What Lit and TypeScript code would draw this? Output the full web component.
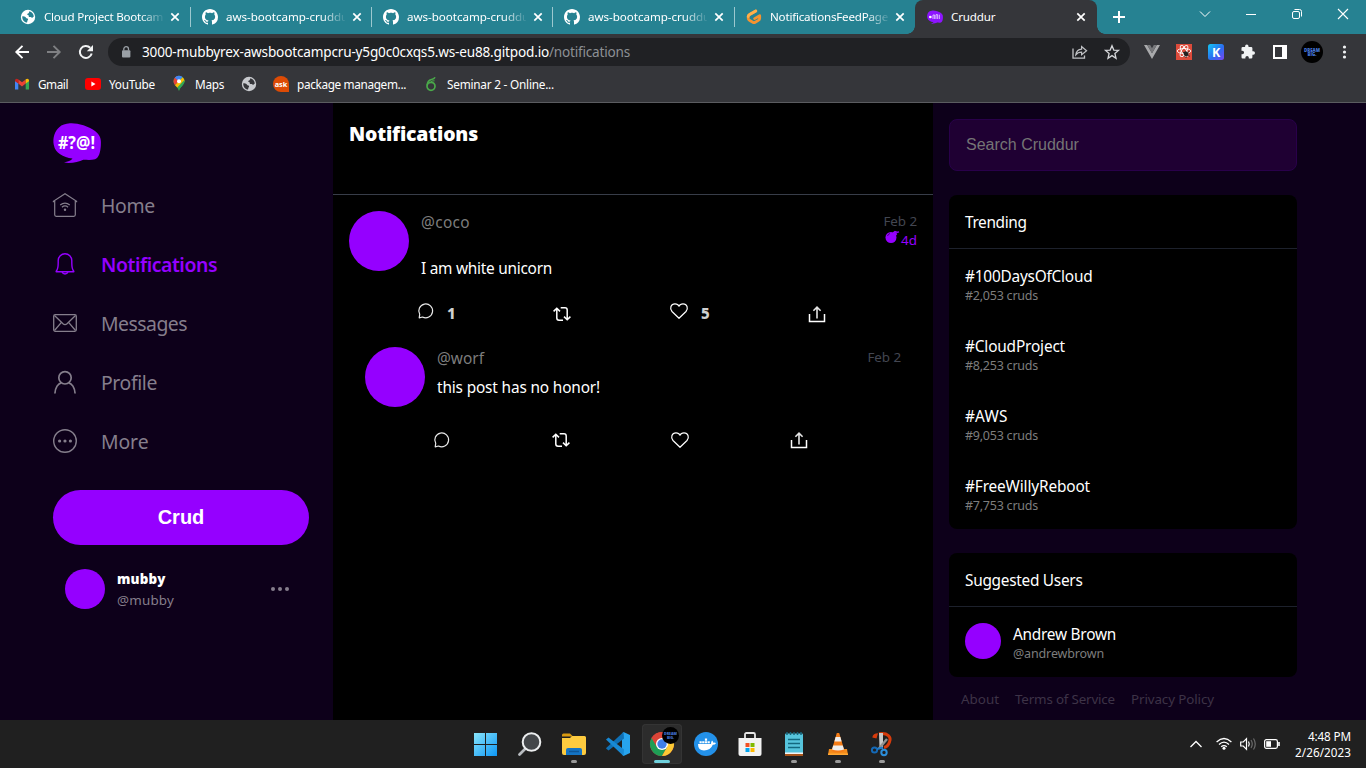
import { LitElement, html, svg, css } from "lit";
import { customElement, property } from "lit/decorators.js";

const draw = (w: number, h: number, body: unknown) =>
  html`<svg width=${w} height=${h} viewBox="0 0 ${w} ${h}" fill="none">${body}</svg>`;

/** A single line of text whose tracking is adjusted so that it fills a given advance. */
@customElement("fit-text")
class FitText extends LitElement {
  @property({ type: Number }) w = 0;
  @property() text = "";
  static styles = css`
    :host { display: inline-block; white-space: pre; flex: none; }
  `;
  render() { return html`<span>${this.text}</span>`; }
  updated() {
    const s = this.renderRoot.querySelector("span")!;
    s.style.letterSpacing = "0px";
    const natural = s.getBoundingClientRect().width;
    s.style.letterSpacing = `${(this.w - natural) / this.text.length}px`;
    this.style.width = `${this.w}px`;
  }
}

const t = (text: string, w: number, cls = "") =>
  html`<fit-text class=${cls} .text=${text} .w=${w}></fit-text>`;

const globe = (fg: string, bg: string) => draw(16, 16, svg`
  <circle cx="8" cy="8" r="7.2" fill=${fg}/>
  <path d="M2.2 7.4 C4 6.9 5.8 8 6.4 9.3 C8.2 9.3 8.6 10.4 7.5 11.6 L7 13.6 C4.3 13.2 2.2 11 2.2 7.4Z" fill=${bg}/>
  <path d="M9.2 2.3 C12.2 3 13.6 5.2 13.8 7.6 L12 9 C11 7.9 10.4 8.3 9.2 8.1 C8.2 7 9.2 6.2 8 5.9 C6.8 5.7 7 4.8 8.2 4.4 C9 4 9.2 3.3 9.2 2.3Z" fill=${bg}/>`);

const github = draw(16, 16, svg`<path fill="#fff" d="M8 0C3.58 0 0 3.58 0 8c0 3.54 2.29 6.53 5.47 7.59.4.07.55-.17.55-.38 0-.19-.01-.82-.01-1.49-2.01.37-2.53-.49-2.69-.94-.09-.23-.48-.94-.82-1.13-.28-.15-.68-.52-.01-.53.63-.01 1.08.58 1.23.82.72 1.21 1.87.87 2.33.66.07-.52.28-.87.51-1.07-1.78-.2-3.64-.89-3.64-3.95 0-.87.31-1.59.82-2.15-.08-.2-.36-1.02.08-2.12 0 0 .67-.21 2.2.82.64-.18 1.32-.27 2-.27s1.36.09 2 .27c1.53-1.04 2.2-.82 2.2-.82.44 1.1.16 1.92.08 2.12.51.56.82 1.27.82 2.15 0 3.07-1.87 3.75-3.65 3.95.29.25.54.73.54 1.48 0 1.07-.01 1.93-.01 2.2 0 .21.15.46.55.38A8.01 8.01 0 0 0 16 8c0-4.42-3.58-8-8-8Z"/>`);

const gitpod = draw(16, 16, svg`
  <path d="M9.8 2 L3.6 5.5 Q2.2 6.3 2.2 7.6 V9.3 Q2.2 10.6 3.4 11.3 L6.8 13.2 Q8 13.9 9.2 13.2 L12.4 11.4 Q13.7 10.7 13.7 9.3 V6.7 L8.6 9.6" stroke="#f5932f" stroke-width="2.8" stroke-linecap="round" stroke-linejoin="round"/>
  <path d="M9.8 2 L3.6 5.5 Q2.2 6.3 2.2 7.6" stroke="#ffb04a" stroke-width="2.8" stroke-linecap="round"/>`);

const bubblePath = "M17 .3 C24 -.2 35 2.8 42 8 C48 12.4 48.3 17.5 47.8 23 C47.3 29 46 35 42 36.2 C38 37.4 34 36.8 30.3 36.8 C25.5 38.8 18 41 11 39.6 C14.8 38.8 18 37.8 19.5 35.6 C10 34 2.4 30.4 .8 22 C-.6 15 1.8 8 6 4.5 C9 1.6 12.5 .6 17 .3Z";
const cruddur = html`<svg width="16" height="14" viewBox="0 0 48 40"><path d=${bubblePath} fill="#8d14ff"/>
  <circle cx="10" cy="20" r="4" fill="#fff"/><path d="M18 26V14h5v12M27 26V13h5v13M37 13v13" stroke="#d9b8ff" stroke-width="3" fill="none"/></svg>`;

const cross = draw(10, 10, svg`<path d="M1.3 1.3 8.7 8.7M8.7 1.3 1.3 8.7" stroke="#fff" stroke-width="1.7"/>`);
const dream = html`<svg width="22" height="22" viewBox="0 0 22 22"><circle cx="11" cy="11" r="11" fill="#000"/>
  <text class="tiny" text-anchor="middle"><tspan x="11" y="10.6">DREAM</tspan><tspan x="11" y="14.8">BIG.</tspan></text></svg>`;

@customElement("browser-chrome")
class BrowserChrome extends LitElement {
  static styles = css`
    :host { display: flex; flex-direction: column; height: 103px; color: #fff; background: #35363a; font-family: "Noto Sans", sans-serif; }
    svg { display: block; flex: none; overflow: visible; }
    .tabs { height: 34px; background: #268292; display: flex; padding-left: 8px; box-sizing: border-box; }
    .tab { width: 181px; height: 34px; display: flex; align-items: center; box-sizing: border-box; padding-left: 12px; font-size: 11.6px; background: linear-gradient(#9cc8cf, #9cc8cf) left 7px / 1px 20px no-repeat; }
    .tab.first { background: none; }
    .tab.first, .tab.wide { width: 182px; }
    .tab.narrow .label, .tab.active .label { width: 118px; }
    .tab.active { background: #35363a; border-radius: 8px 8px 0 0; width: 182px; position: relative; }
    .active::before, .active::after { content: ""; position: absolute; bottom: 0; width: 8px; height: 8px; }
    .active::before { left: -8px; background: radial-gradient(circle at 0 0, transparent 7.5px, #35363a 8px); }
    .active::after { right: -8px; background: radial-gradient(circle at 100% 0, transparent 7.5px, #35363a 8px); }
    .label { width: 119px; margin: 0 7px 0 8px; overflow: hidden; display: flex; line-height: 18px; }
    .fade { mask-image: linear-gradient(90deg, #000 96px, transparent 121px); -webkit-mask-image: linear-gradient(90deg, #000 96px, transparent 121px); }
    .plus { margin: 11px 0 0 16px; }
    .wins { margin-left: auto; display: grid; grid-template-columns: repeat(4, 46px); justify-items: center; align-items: center; height: 28px; }
    .bar { height: 36px; display: flex; align-items: center; padding-left: 6px; }
    .cell { width: 32px; display: flex; justify-content: center; flex: none; }
    .omni { width: 1022px; height: 28px; margin: 0 6px; background: #202124; border-radius: 14px; display: flex; align-items: center; font-size: 13.6px; line-height: 20px; box-sizing: border-box; padding: 0 2px 0 13px; }
    .omni .lock { margin-right: 11px; }
    .path { color: #8d9094; }
    .gap { flex: 1; }
    .marks { height: 32px; display: flex; align-items: center; font-size: 11.8px; line-height: 18px; padding: 0 0 5px 14px; box-sizing: border-box; }
    .marks svg { margin-right: 8px; }
    .marks fit-text { margin-right: 17px; }
    .lone { margin-right: 8px; }
    .edge { height: 1px; background: #5b5c60; }
    .tiny { font: 900 4.4px "Open Sans", sans-serif; fill: #4577d8; }
    .k { font: 700 12.5px "Open Sans", sans-serif; fill: #fff; }
    .ask { font: 700 7.6px "Open Sans", sans-serif; fill: #fff; }
  `;
  tab(icon: unknown, text: string, w: number, cls = "") {
    return html`<div class="tab ${cls}">${icon}<div class="label ${cls.includes("active") ? "" : "fade"}">${t(text, w)}</div>${cross}</div>`;
  }
  render() {
    return html`
      <div class="tabs">
        ${this.tab(globe("#fff", "#268292"), "Cloud Project Bootcamp", 126, "first")}
        ${this.tab(github, "aws-bootcamp-cruddur", 127)}
        ${this.tab(github, "aws-bootcamp-cruddur", 127)}
        ${this.tab(github, "aws-bootcamp-cruddur", 127, "wide")}
        ${this.tab(gitpod, "NotificationsFeedPage", 118, "narrow")}
        ${this.tab(cruddur, "Cruddur", 44.5, "active")}
        <div class="plus">${draw(12, 12, svg`<path d="M6 0V12M0 6H12" stroke="#fff" stroke-width="2"/>`)}</div>
        <div class="wins">
          ${draw(10, 6, svg`<path d="M0 .5 5 5.5 10 .5" stroke="#fff"/>`)}
          ${draw(10, 2, svg`<path d="M0 1.5H10" stroke="#fff"/>`)}
          ${draw(10, 10, svg`<rect x=".5" y="2.5" width="7" height="7" rx="1.5" stroke="#fff"/><path d="M2.5 .5H7.5Q9.5 .5 9.5 2.5V7.5" stroke="#fff"/>`)}
          ${draw(10, 10, svg`<path d="M0 0 10 10M10 0 0 10" stroke="#fff" stroke-width="1.1"/>`)}
        </div>
      </div>
      <div class="bar">
        <div class="cell">${draw(14, 14, svg`<path d="M14 7H1.5M7.5 .8 1.3 7 7.5 13.2" stroke="#fff" stroke-width="1.9"/>`)}</div>
        <div class="cell">${draw(14, 14, svg`<path d="M0 7H12.5M6.5 .8 12.7 7 6.5 13.2" stroke="#7f8083" stroke-width="1.9"/>`)}</div>
        <div class="cell">${draw(14, 14, svg`<path d="M12.7 8.5A6 6 0 1 1 11.2 2.8" stroke="#f1f3f4" stroke-width="2"/><path d="M14 0V6.2H7.8Z" fill="#f1f3f4"/>`)}</div>
        <div class="omni">
          <span class="lock">${draw(10, 12, svg`<rect x="1" y="4.2" width="8.4" height="7.2" rx="1" fill="#9aa0a6"/><path d="M2.8 4.5V3A2.3 2.3 0 0 1 7.5 3V4.5" stroke="#9aa0a6" stroke-width="1.3"/>`)}</span>
          ${t("3000-mubbyrex-awsbootcampcru-y5g0c0cxqs5.ws-eu88.gitpod.io", 407)}${t("/notifications", 81, "path")}
          <span class="gap"></span>
          <span class="cell">${draw(16, 14, svg`<path d="M1 3.5V13.2H12.5V10.5" stroke="#c0c2c5" stroke-width="1.3"/><path d="M3.8 9.8C4.2 6.4 6 4.4 9.6 4.1V1.5L14.6 5.7 9.6 9.7V7.2C7 7.2 5.2 8 3.8 9.8Z" stroke="#c0c2c5" stroke-width="1.2"/>`)}</span>
          <span class="cell">${draw(16, 16, svg`<path d="M8 1.7 9.8 6.1 14.5 6.4 10.9 9.5 12 14.2 8 11.6 4 14.2 5.1 9.5 1.5 6.4 6.2 6.1Z" stroke="#d5d7da" stroke-width="1.3"/>`)}</span>
        </div>
        <div class="cell">${draw(16, 14, svg`<path d="M0 0H3.2L8 8.2 12.8 0H16L8 14Z" fill="#a9aaac"/><path d="M3.2 0H6.2L8 3.2 9.8 0H12.8L8 8.2Z" fill="#77787b"/>`)}</div>
        <div class="cell">${draw(16, 16, svg`<rect width="16" height="16" fill="#dd4b3b"/><g stroke="#fff" stroke-width=".9"><ellipse cx="8" cy="7" rx="6.8" ry="2.5"/><ellipse cx="8" cy="7" rx="6.3" ry="2.4" transform="rotate(60 8 7)"/><ellipse cx="8" cy="7" rx="6.3" ry="2.4" transform="rotate(120 8 7)"/></g><ellipse cx="10" cy="9.8" rx="2.6" ry="2.2" transform="rotate(40 10 9.800)" fill="#242020"/><path d="M6.8 8 9 9.5M8 12.8 9.5 11M13.5 6.8 11.5 9M14 12.5 12 10.8M10 14V11" stroke="#242020" stroke-width=".8"/>`)}</div>
        <div class="cell">${draw(16, 16, svg`<defs><linearGradient id="kg" x1="0" y1="0" x2="1" y2="1"><stop offset="0" stop-color="#12c9f5"/><stop offset=".55" stop-color="#2b6df0"/><stop offset="1" stop-color="#7a45f0"/></linearGradient></defs><rect width="16" height="16" rx="2.5" fill="url(#kg)"/><text x="4" y="12.6" class="k">K</text>`)}</div>
        <div class="cell">${draw(16, 16, svg`<path d="M12.8 7.3h-.9V4.2A1.3 1.3 0 0 0 10.6 2.9H8V2.3a1.7 1.7 0 0 0-3.4 0v.6H2.2A1.3 1.3 0 0 0 1 4.2v2.5h.8a1.8 1.8 0 0 1 0 3.6H1v2.9a1.3 1.3 0 0 0 1.2 1.3h2.7v-.9a1.7 1.7 0 0 1 3.4 0v.9h2.3a1.3 1.3 0 0 0 1.3-1.3v-2.5h.9a1.7 1.7 0 0 0 0-3.4Z" transform="translate(.5 0)" fill="#f1f3f4"/>`)}</div>
        <div class="cell">${draw(14, 14, svg`<rect x="1" y="1" width="12" height="12" stroke="#fff" stroke-width="2"/><rect x="9" y="0" width="5" height="14" fill="#fff"/>`)}</div>
        <div class="cell">${dream}</div>
        <div class="cell">${draw(4, 14, svg`<g fill="#f1f3f4"><circle cx="2.500" cy="2" r="1.6"/><circle cx="2.500" cy="7" r="1.6"/><circle cx="2.500" cy="12" r="1.6"/></g>`)}</div>
      </div>
      <div class="marks">
        ${draw(16, 12, svg`<path d="M1 2.5V11.5H4.3V5Z" fill="#4285f4"/><path d="M15 2.5V11.5H11.7V5Z" fill="#34a853"/><path d="M4.3 1.5V5.6L8 8.4 11.7 5.6V1.5L8 4.3Z" fill="#ea4335"/><path d="M1 2.5Q1.2 0 4.3 1.3V5.6L1 3.2Z" fill="#c5221f"/><path d="M15 2.5Q14.8 0 11.7 1.3V5.6L15 3.2Z" fill="#fbbc04"/>`)}${t("Gmail", 30)}
        ${draw(16, 12, svg`<rect width="16" height="12" rx="3" fill="#f00"/><path d="M6.4 3.6V8.4L10.5 6Z" fill="#fff"/>`)}${t("YouTube", 46)}
        ${draw(15, 15, svg`<g transform="translate(1 0)"><path d="M6 15C5.6 11.5 .5 9 .5 5.3A5.5 5.5 0 0 1 11.5 5.3C11.5 9 6.4 11.5 6 15Z" fill="#34a853"/><path d="M.5 5.3A5.5 5.5 0 0 1 4 .2L6 5.3 2 9.3Q.5 7.5 .5 5.3Z" fill="#ea4335"/><path d="M1.8 1.8A5.5 5.5 0 0 1 9.5 1L6 5.3Z" fill="#4285f4"/><path d="M2 9.3 9.8 1.2Q11.5 3 11.5 5.3L4.5 11.7Z" fill="#fbbc04"/><path d="M11.5 5.3C11.5 9 6.4 11.5 6 15 5.8 13.5 5 12.5 4.3 11.5L11.3 4Z" fill="#34a853"/><circle cx="6" cy="5.3" r="2" fill="#fff"/></g>`)}${t("Maps", 29)}
        <span class="lone">${globe("#c8cace", "#35363a")}</span>
        ${draw(16, 16, svg`<path d="M8 0A8 8 0 1 0 8 16H16V8A8 8 0 0 0 8 0Z" fill="#dd4b05"/><text x="1.7" y="10.6" class="ask" textLength="12.6" lengthAdjust="spacingAndGlyphs">ask</text>`)}${t("package managem...", 109)}
        ${draw(16, 16, svg`<g transform="translate(1 1)"><ellipse cx="7" cy="9.3" rx="4" ry="4" stroke="#4aa94a" stroke-width="1.7"/><path d="M3.2 8.5Q3.2 3.5 7.5 2.5 10.5 2 11 .3" stroke="#4aa94a" stroke-width="1.5"/><path d="M6.5 5.3Q7.5 3.5 10.5 3.8" stroke="#4aa94a"/></g>`)}${t("Seminar 2 - Online...", 107)}
      </div>
      <div class="edge"></div>`;
  }
}

const navIcons = {
  home: draw(24, 24, svg`<g stroke="#857e8c" stroke-width="1.2"><path d="M.4 9.3V8.3L12 .8 23.6 8.3V9.3M1.7 8V21.8Q1.7 23.3 3.2 23.3H20.8Q22.3 23.3 22.3 21.8V8"/><path d="M7.2 12Q12 8.2 16.8 12M8.9 14.2Q12 11.7 15.1 14.2"/></g><circle cx="12" cy="16.8" r="1.2" fill="#857e8c"/>`),
  bell: draw(24, 24, svg`<path d="M3.2 19.3C5 17.3 5.2 15 5.2 11V8.5A6.8 6.8 0 0 1 18.8 8.5V11C18.8 15 19 17.3 20.8 19.3V19.8H3.2Z" stroke="#9500ff" stroke-width="1.4" stroke-linejoin="round"/><path d="M9 20.2Q10 22 12 22 14 22 15 20.2" stroke="#9500ff" stroke-width="1.4"/>`),
  mail: draw(24, 24, svg`<g stroke="#857e8c" stroke-width="1.3"><rect x=".7" y="3.7" width="22.6" height="16.6" rx="1.5"/><path d="M1.5 4.5 10 12.7Q12 14.5 14 12.7L22.5 4.5M1.5 19.5 8.4 11.3M22.5 19.5 15.6 11.3"/></g>`),
  user: draw(24, 24, svg`<g stroke="#857e8c" stroke-width="1.7"><circle cx="12" cy="7.8" r="6.2"/><path d="M1.9 23.5C2.2 17.5 5.2 13.4 8.3 12.8M15.7 12.8C18.8 13.4 21.8 17.5 22.1 23.5"/></g>`),
  more: draw(24, 24, svg`<circle cx="12" cy="12" r="11.3" stroke="#857e8c" stroke-width="1.4"/><g fill="#857e8c"><circle cx="6.6" cy="12" r="1.6"/><circle cx="12" cy="12" r="1.6"/><circle cx="17.4" cy="12" r="1.6"/></g>`),
};

@customElement("side-nav")
class SideNav extends LitElement {
  static styles = css`
    :host { display: block; width: 333px; box-sizing: border-box; padding: 20px 24px 0 53px; background: #0d001a; font-family: "Noto Sans", sans-serif; color: #857e8c; }
    svg { display: block; flex: none; overflow: visible; }
    .logo { height: 53px; }
    .mark { font: 700 17px "Open Sans", sans-serif; fill: #fff; }
    .item { height: 59px; display: flex; align-items: center; gap: 24px; font-size: 19.4px; line-height: 28px; }
    .item svg { margin-bottom: 1px; }
    .item fit-text { padding-top: 1px; }
    .on { color: #9500ff; font-weight: 600; }
    .crud { height: 55px; margin-top: 19px; border-radius: 28px; background: #9500ff; color: #fff; font: 700 20px "Liberation Sans", sans-serif; display: flex; align-items: center; justify-content: center; }
    .me { display: flex; align-items: center; margin-top: 24px; padding: 0 20px 0 12px; height: 40px; }
    .face { width: 40px; height: 40px; border-radius: 50%; background: #9500ff; margin-right: 12px; }
    .who { flex: 1; display: flex; flex-direction: column; font-size: 13.4px; line-height: 21px; padding-top: 2px; }
    .name { color: #fff; font-weight: 900; font-size: 13.4px; }
  `;
  render() {
    return html`
      <div class="logo"><svg width="48" height="40" viewBox="0 0 48 40"><path d=${bubblePath} fill="#9500ff"/><text x="5" y="25.5" textLength="37" lengthAdjust="spacingAndGlyphs" class="mark">#?@!</text></svg></div>
      <div class="item">${navIcons.home}${t("Home", 54)}</div>
      <div class="item on">${navIcons.bell}${t("Notifications", 116)}</div>
      <div class="item">${navIcons.mail}${t("Messages", 86)}</div>
      <div class="item">${navIcons.user}${t("Profile", 56)}</div>
      <div class="item">${navIcons.more}${t("More", 47.5)}</div>
      <div class="crud">Crud</div>
      <div class="me"><div class="face"></div><div class="who">${t("mubby", 48.5, "name")}${t("@mubby", 57)}</div>
        ${draw(18, 4, svg`<g fill="#857e8c"><circle cx="2" cy="2" r="2"/><circle cx="9" cy="2" r="2"/><circle cx="16" cy="2" r="2"/></g>`)}</div>`;
  }
}

const act = {
  reply: draw(16, 16, svg`<path d="M1.2 14.9 1.7 11.3A6.9 6.9 0 1 1 4.5 14Z" stroke="#e8e8e8" stroke-width="1.2" stroke-linejoin="round"/>`),
  repost: draw(18, 14, svg`<path d="M.6 4.4 3.8 1.2 7 4.400M3.8 1.6V11Q3.8 13.200 6 13.200H10M7.700 .8H12Q14.200 .8 14.200 3V12.400M11 9.600 14.200 12.800 17.400 9.600" stroke="#fff" stroke-width="1.5"/>`),
  heart: draw(18, 16, svg`<path d="M9 15.3 2 8.5C-.6 5.5 .8 .8 5 .8 7 .8 8.5 2 9 3.2 9.5 2 11 .8 13 .8 17.2 .8 18.6 5.5 16 8.5Z" stroke="#fff" stroke-width="1.2" stroke-linejoin="round"/>`),
  share: draw(18, 17, svg`<path d="M1.500 8V15.500H16.500V8" stroke="#fff" stroke-width="1.500"/><path d="M9 12.500V1.500M5.400 4.800 9 1.200 12.600 4.800" stroke="#e4e4e4" stroke-width="1.600"/>`),
};

@customElement("activity-feed")
class ActivityFeed extends LitElement {
  static styles = css`
    :host { display: block; width: 600px; background: #000; color: #fff; font-family: "Noto Sans", sans-serif; font-size: 15.4px; }
    svg { display: block; flex: none; overflow: visible; }
    .head { height: 92px; box-sizing: border-box; border-bottom: 1px solid #383d49; padding: 17px 16px; font-weight: 900; font-size: 19.4px; line-height: 28px; }
    .post { display: flex; padding: 16px 16px 0; height: 99px; box-sizing: border-box; }
    .reply { padding: 0 32px; height: 84px; }
    .face { width: 60px; height: 60px; border-radius: 50%; background: #9500ff; margin-right: 12px; flex: none; }
    .body { flex: 1; display: flex; flex-direction: column; line-height: 22px; gap: 24px; padding-top: 1px; }
    .reply .body { gap: 7px; }
    .handle { color: #7d7d7d; }
    .when { display: flex; flex-direction: column; align-items: flex-end; font-size: 13.4px; line-height: 19px; color: #434651; padding-top: 1px; }
    .ttl { color: #9500ff; display: flex; gap: 2px; }
    .acts { display: grid; align-items: start; }
    .first { grid-template-columns: 135px 117px 138px 40px; padding: 9px 0 0 85px; height: 53px; box-sizing: border-box; }
    .second { grid-template-columns: 118px 119px 119px 40px; padding: 1px 0 0 101px; }
    .act { display: flex; gap: 13px; }
    .first .act:nth-child(even) { padding-top: 4px; }
    .n { color: #d0d0d0; font-weight: 800; font-size: 15px; line-height: 21px; }
    .second .act:nth-child(even) { padding-top: 1px; }
    .second .act:last-child { padding-top: 0; }
    .first .act:last-child { padding-top: 3px; }
  `;
  render() {
    return html`
      <div class="head">${t("Notifications", 129)}</div>
      <div class="post"><div class="face"></div><div class="body">${t("@coco", 49, "handle")}${t("I am white unicorn", 131)}</div>
        <div class="when">${t("Feb 2", 33.5)}<div class="ttl">${draw(14, 14, svg`<circle cx="6" cy="6.5" r="5.5" fill="#9500ff"/><path d="M8 2.2 10 .6Q11.5 1.6 14 .9" stroke="#9500ff" stroke-width="1.5"/><path d="M9 1.5 11.5 4" stroke="#9500ff" stroke-width="2.5"/><path d="M2.5 5Q3.2 3 5 2.5" stroke="#33005c" stroke-width=".8"/>`)}${t("4d", 16)}</div></div></div>
      <div class="acts first">
        <div class="act">${act.reply}${t("1", 9, "n")}</div><div class="act">${act.repost}</div>
        <div class="act">${act.heart}${t("5", 9, "n")}</div><div class="act">${act.share}</div></div>
      <div class="post reply"><div class="face"></div><div class="body">${t("@worf", 47, "handle")}${t("this post has no honor!", 163)}</div>
        <div class="when">${t("Feb 2", 33.5)}</div></div>
      <div class="acts second"><div class="act">${act.reply}</div><div class="act">${act.repost}</div><div class="act">${act.heart}</div><div class="act">${act.share}</div></div>`;
  }
}

const trends: [string, number, string][] = [
  ["#100DaysOfCloud", 127.5, "#2,053 cruds"], ["#CloudProject", 100, "#8,253 cruds"],
  ["#AWS", 42.5, "#9,053 cruds"], ["#FreeWillyReboot", 125, "#7,753 cruds"],
];

@customElement("right-rail")
class RightRail extends LitElement {
  static styles = css`
    :host { display: block; flex: 1; box-sizing: border-box; padding: 16px 69px 0 16px; background: #0d001a; color: #fff; font-family: "Noto Sans", sans-serif; font-size: 15.4px; }
    .search { height: 52px; box-sizing: border-box; border: 1px solid #29004a; border-radius: 8px; background: #1f0033; color: #757575; font: 16px/49px "Liberation Sans", sans-serif; padding-left: 16px; }
    .card { margin-top: 24px; background: #000; border-radius: 8px; }
    .title { height: 54px; box-sizing: border-box; border-bottom: 1px solid #1d212c; padding: 17px 16px; line-height: 22px; }
    .trend { height: 70px; box-sizing: border-box; padding: 17px 16px 0; display: flex; flex-direction: column; }
    .trend fit-text, .who fit-text { line-height: 21px; }
    .trend .sub, .who .sub { color: #7d7d7d; font-size: 12.5px; line-height: 17px; }
    .user { display: flex; height: 70px; box-sizing: border-box; padding: 16px; gap: 12px; }
    .face { width: 36px; height: 36px; border-radius: 50%; background: #9500ff; }
    .who { display: flex; flex-direction: column; padding-top: 1px; }
    .links { display: flex; gap: 16px; padding: 12px; color: #3d3347; font-size: 13.4px; line-height: 20px; }
  `;
  render() {
    return html`
      <div class="search">Search Cruddur</div>
      <div class="card"><div class="title">${t("Trending", 61.5)}</div>
        ${trends.map(([a, w, b]) => html`<div class="trend">${t(a, w)}${t(b, 73, "sub")}</div>`)}</div>
      <div class="card"><div class="title">${t("Suggested Users", 117.5)}</div>
        <div class="user"><div class="face"></div><div class="who">${t("Andrew Brown", 103)}${t("@andrewbrown", 91, "sub")}</div></div></div>
      <div class="links">${t("About", 38)}${t("Terms of Service", 100)}${t("Privacy Policy", 83)}</div>`;
  }
}

const apps = [
  draw(24, 24, svg`<defs><linearGradient id="wg" x1="0" y1="0" x2="24" y2="24" gradientUnits="userSpaceOnUse"><stop offset="0" stop-color="#8be6fb"/><stop offset="1" stop-color="#0a95f5"/></linearGradient></defs><path d="M0 1H11V12H0ZM12 1H23V12H12ZM0 13H11V24H0ZM12 13H23V24H12Z" fill="url(#wg)"/>`),
  draw(24, 24, svg`<path d="M1.5 22.5 8 16" stroke="#b8bcc0" stroke-width="2.8" stroke-linecap="round"/><circle cx="13.5" cy="10" r="8.8" fill="#44474a" stroke="#eceeef" stroke-width="2"/>`),
  draw(24, 24, svg`<path d="M0 3Q0 1.5 1.5 1.5H8L11 4.5H0Z" fill="#d99a10"/><path d="M0 6H8L10 4H22.5Q24 4 24 5.5V21Q24 23 22 23H2Q0 23 0 21Z" fill="#fdcb3f"/><path d="M4 23V18Q4 16 6 16H18Q20 16 20 18V23Z" fill="#1474c4"/><path d="M7 19.5H17" stroke="#0d5698" stroke-width="1.5"/>`),
  draw(24, 24, svg`<path d="M17.5 0 24 3V21L17.5 24 16 22.5V1.5Z" fill="#27a4ee"/><path d="M17.5 0 1 15.3 0 16.5 2.5 18.5 18 6.5Z" fill="#0f70b5"/><path d="M17.5 24 0 7.5 2.5 5.5 18 17.5Z" fill="#1889d4"/>`),
  html`<svg width="28" height="28" viewBox="0 0 28 28"><circle cx="12" cy="16" r="12" fill="#db4437"/><path d="M12 16 1.6 10A12 12 0 0 0 12 28L17.2 19Z" fill="#1e9e55"/><path d="M12 16 17.2 19 12 28A12 12 0 0 0 22.4 10H12Z" fill="#fcc934"/><path d="M12 16V10H22.4A12 12 0 0 0 1.6 10L6.8 19Z" fill="#db4437"/><circle cx="12" cy="16" r="6" fill="#fff"/><circle cx="12" cy="16" r="4.7" fill="#3f7fe8"/><circle cx="20.5" cy="7.5" r="8.5" fill="#000"/><text class="tiny" text-anchor="middle"><tspan x="20.5" y="7.4">DREAM</tspan><tspan x="20.5" y="10.8">BIG.</tspan></text></svg>`,
  draw(24, 24, svg`<circle cx="12" cy="12" r="12" fill="#2391e9"/><path d="M4 12H17Q17 9.5 18 8.5 19.2 9.5 19.3 10.8 21 10.3 22 11.2 21 12.8 18.8 12.8 16.5 18.5 10 18.5 4 18.5 4 12Z" fill="#fff"/><path d="M5.5 9.2H7.7V11.3H5.5ZM8.2 9.2H10.4V11.3H8.2ZM10.9 9.2H13.1V11.3H10.9ZM13.6 9.2H15.8V11.3H13.6ZM10.9 6.6H13.1V8.7H10.9Z" fill="#fff"/>`),
  draw(24, 24, svg`<path d="M7 7V2.5Q7 1 8.5 1H15.5Q17 1 17 2.5V7" stroke="#e6e6e6" stroke-width="1.8"/><path d="M.5 6H23.5V22Q23.5 24 21.5 24H2.5Q.5 24 .5 22Z" fill="#f2f2f2"/><path d="M7.5 11H11.5V15H7.5Z" fill="#f25022"/><path d="M12.5 11H16.5V15H12.5Z" fill="#7fba00"/><path d="M7.5 16H11.5V20H7.5Z" fill="#00a4ef"/><path d="M12.5 16H16.5V20H12.5Z" fill="#ffb900"/>`),
  draw(24, 24, svg`<rect x="3" y="20" width="18" height="4" fill="#a8541a"/><rect x="3" y="1.5" width="18" height="20.5" rx="1" fill="#56c4dc"/><rect x="3" y="20.5" width="18" height="1.5" fill="#f4f4f4"/><path d="M5 0V3M8.5 0V3M12 0V3M15.5 0V3M19 0V3" stroke="#15647b" stroke-width="1.5"/><path d="M6 7.5H18M6 11.5H18M6 15.5H18" stroke="#13687f" stroke-width="1.7"/>`),
  draw(24, 24, svg`<path d="M3 17H21L22 23H2Z" fill="#f38b1b"/><path d="M2 21.5H22V23H2Z" fill="#ffa835"/><path d="M10.8 1H13.2L18.5 19Q12 22 5.5 19Z" fill="#f47c16"/><path d="M9.6 5H14.4L15.6 9.5H8.4ZM7.2 13.5H16.8L18 17.5Q12 19.5 6 17.5Z" fill="#eee"/>`),
  draw(24, 24, svg`<path d="M9 1.8C18 .5 21.5 5 19.5 10 18.5 13 16.5 15 14 15.5" stroke="#d83b0b" stroke-width="3"/><path d="M8 1.3Q3 1.3 2.3 5.5L6.5 6.5Z" fill="#d83b0b"/><path d="M9 1 13 1 13 17 9.5 15Z" fill="#c9c9c9"/><path d="M17 7 9 16.5" stroke="#929292" stroke-width="2.5"/><circle cx="4.5" cy="18" r="2.6" stroke="#1469b6" stroke-width="2"/><circle cx="14" cy="20.5" r="2.7" stroke="#2b8edb" stroke-width="2"/><path d="M7 17 13 15.5" stroke="#1e7bc9" stroke-width="2"/>`),
];

@customElement("task-bar")
class TaskBar extends LitElement {
  static styles = css`
    :host { display: grid; grid-template-columns: 1fr auto 1fr; height: 48px; background: #202020; color: #fff; font-family: "Noto Sans", sans-serif; font-size: 11.7px; line-height: 16px; }
    svg { display: block; flex: none; overflow: visible; }
    .apps { grid-column: 2; display: flex; gap: 4px; padding: 4px 0 4px 2px; }
    .app { width: 40px; height: 40px; display: flex; align-items: center; justify-content: center; border-radius: 4px; position: relative; }
    .focus { background: #2c2c2c; box-shadow: inset 0 0 0 1px #343434; }
    .focus svg { margin: -4px 0 0 4px; }
    .run::after { content: ""; position: absolute; left: 17px; bottom: 1px; width: 6px; height: 3px; border-radius: 2px; background: #9a9a9a; }
    .run.focus::after { left: 12px; width: 16px; background: #6fd0dc; }
    .tiny { font: 900 3.5px "Open Sans", sans-serif; fill: #4577d8; }
    .tray { display: flex; justify-content: flex-end; align-items: center; padding-right: 15px; padding-bottom: 1px; }
    .c { margin-right: 14px; } .w { margin-right: 8px; } .s { margin-right: 8px; } .b { margin-right: 15px; }
    .clock { display: flex; flex-direction: column; align-items: flex-end; }
  `;
  render() {
    return html`<div class="apps">${apps.map((a, i) => html`<div class="app ${[2, 4, 7, 8, 9].includes(i) ? "run" : ""} ${i === 4 ? "focus" : ""}">${a}</div>`)}</div>
      <div class="tray">
        <span class="c">${draw(12, 8, svg`<path d="M.5 7 6 1.5 11.5 7" stroke="#fff" stroke-width="1.3"/>`)}</span>
        <span class="w">${draw(16, 13, svg`<g stroke="#fff" stroke-width="1.3"><path d="M.6 5Q8-2 15.4 5M3 7.4Q8 2.8 13 7.4M5.2 9.8Q8 7.4 10.8 9.8"/></g><circle cx="8" cy="11.3" r="1.5" fill="#fff"/>`)}</span>
        <span class="s">${draw(16, 14, svg`<path d="M.7 5H3.3L6.5 1.7V12.3L3.3 9H.7Z" stroke="#fff" stroke-width="1.2"/><path d="M8.5 4.5Q10 7 8.5 9.5" stroke="#fff" stroke-width="1.2"/><path d="M11 3Q13.5 7 11 11M13.5 1.5Q17 7 13.5 12.5" stroke="#6b6b6b" stroke-width="1.2"/>`)}</span>
        <span class="b">${draw(16, 10, svg`<rect x=".6" y=".6" width="12.8" height="8.8" rx="1.8" stroke="#fff" stroke-width="1.2"/><rect x="2.2" y="2.2" width="4.8" height="5.6" fill="#fff"/><path d="M15 3V7" stroke="#fff" stroke-width="1.6"/>`)}</span>
        <div class="clock">${t("4:48 PM", 43)}${t("2/26/2023", 56)}</div></div>`;
  }
}

@customElement("app-root")
class AppRoot extends LitElement {
  static styles = css`
    :host { display: flex; flex-direction: column; width: 1366px; height: 768px; overflow: hidden; background: #000; }
    .page { height: 617px; display: flex; overflow: hidden; }
  `;
  render() {
    return html`<browser-chrome></browser-chrome>
      <div class="page"><side-nav></side-nav><activity-feed></activity-feed><right-rail></right-rail></div>
      <task-bar></task-bar>`;
  }
}
